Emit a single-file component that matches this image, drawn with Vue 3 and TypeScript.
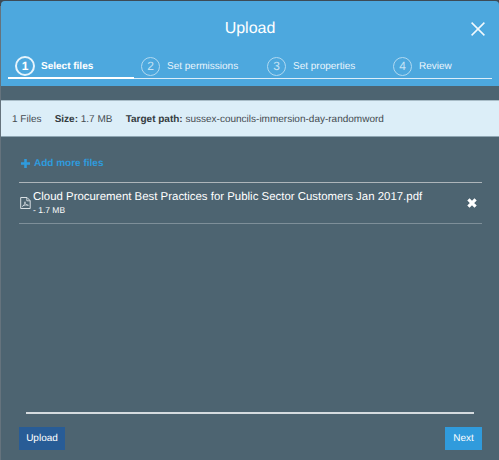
<script setup lang="ts">
interface Step {
  id: number
  label: string
}

const steps: Step[] = [
  { id: 1, label: 'Select files' },
  { id: 2, label: 'Set permissions' },
  { id: 3, label: 'Set properties' },
  { id: 4, label: 'Review' },
]
const current = 1

const file = {
  name: 'Cloud Procurement Best Practices for Public Sector Customers Jan 2017.pdf',
  size: '1.7 MB',
}
const target = 'sussex-councils-immersion-day-randomword'
</script>

<template>
  <div class="backdrop">
    <section class="dialog">
      <header class="header">
        <div class="title-row">
          <h1>Upload</h1>
          <button class="close" aria-label="Close">
            <svg width="14" height="14" viewBox="0 0 14 14">
              <path d="M.6 .6 13.4 13.4M13.4 .6 .6 13.4" fill="none" stroke="#f2f9fd" stroke-width="1.5" />
            </svg>
          </button>
        </div>
        <ol class="steps">
          <li v-for="s in steps" :key="s.id" :class="{ active: s.id === current }">
            <span class="num">{{ s.id }}</span>
            <span class="label">{{ s.label }}</span>
          </li>
        </ol>
      </header>

      <div class="info">
        <span>1 Files</span>
        <span><b>Size:</b> {{ file.size }}</span>
        <span><b>Target path:</b> {{ target }}</span>
      </div>

      <div class="body">
        <a class="add">
          <svg width="9" height="9" viewBox="0 0 9 9">
            <path d="M3.2 0h2.6v3.2H9v2.6H5.8V9H3.2V5.8H0V3.2h3.2z" fill="#2f9bdd" />
          </svg>
          Add more files
        </a>
        <div class="file">
          <svg class="pdf" width="11" height="12" viewBox="0 0 11 12">
            <g fill="none" stroke="#d9e0e4">
              <path d="M.7 .5h6.3l3.2 3.2v7.8H.7z" />
              <path d="M6.8 .6v3.2h3.3" stroke-width=".9" />
              <path d="M2.2 9.8c1.5-.6 2.9-3.2 2.8-5.3M4.9 5c.2 2 1.5 3.3 3.6 3.4M2.7 8.8c1.6-.8 3.2-1 5.6-.7" stroke-width=".8" />
            </g>
          </svg>
          <div class="meta">
            <div class="name">{{ file.name }}</div>
            <div class="size">- {{ file.size }}</div>
          </div>
          <button class="remove" aria-label="Remove file">
            <svg width="10" height="10" viewBox="0 0 10 10">
              <path d="M1.4 1.4 8.6 8.6M8.6 1.4 1.4 8.6" fill="none" stroke="#fff" stroke-width="3.2" />
            </svg>
          </button>
        </div>
      </div>

      <footer class="footer">
        <button class="btn upload">Upload</button>
        <button class="btn next">Next</button>
      </footer>
    </section>
  </div>
</template>

<style>
body {
  overflow: hidden;
}
</style>

<style scoped>
* {
  box-sizing: border-box;
}
.backdrop {
  height: 460px;
  padding: 1px 0 0 1px;
  background: linear-gradient(#3d4b56, #3d4b56) top / 100% 6px no-repeat, #65737d;
  font-family: 'Liberation Sans', Arial, sans-serif;
  font-size: 10px;
  color: #fff;
  text-rendering: geometricPrecision;
}
.dialog {
  display: flex;
  flex-direction: column;
  height: 459px;
  background: #4d6471;
  border-radius: 4px 4px 0 0;
  overflow: hidden;
}
button {
  border: 0;
  padding: 0;
  background: none;
  font: inherit;
  color: inherit;
  text-rendering: inherit;
}
svg {
  display: block;
}
.header {
  height: 85px;
  background: #4da8de;
  padding: 0 7px;
}
.title-row {
  display: grid;
  grid-template-columns: 1fr auto 1fr;
  align-items: center;
  padding: 18px 7px 0 0;
  height: 38px;
}
h1 {
  grid-column: 2;
  margin: 0 0 0 7px;
  font-size: 16px;
  line-height: 20px;
  font-weight: 400;
}
.close {
  justify-self: end;
}
.steps {
  display: flex;
  margin: 16px 0 0;
  padding: 0;
  list-style: none;
}
li {
  display: flex;
  flex: none;
  align-items: center;
  gap: 7px;
  width: 126px;
  height: 24px;
  padding: 0 0 1px 7px;
  border-bottom: 1px solid #dceefa;
  color: #eaf5fc;
}
li:last-child {
  flex: 1;
}
li.active {
  border-bottom: 2px solid #fff;
  color: #fff;
  font-weight: 700;
  padding-bottom: 0;
}
.num {
  display: flex;
  align-items: center;
  justify-content: center;
  width: 19px;
  height: 19px;
  border: 1px solid #b0d9f1;
  border-radius: 50%;
  color: #c5e3f5;
  font-size: 12px;
  line-height: 17px;
}
.active .num {
  width: 20px;
  height: 20px;
  margin-right: -1px;
  border: 2px solid #e6f4fc;
  color: #fff;
}
.info {
  display: flex;
  align-items: center;
  gap: 13.2px;
  height: 37px;
  margin-top: 14px;
  padding: 1px 11px 0;
  background: #dceef8;
  border-top: 1px solid #a9bdc8;
  border-bottom: 1px solid #8fa6b3;
  color: #444b50;
}
.info b {
  color: #343b40;
}
.body {
  flex: 1;
  margin: 0 17px 0 18px;
}
.add {
  display: flex;
  align-items: center;
  gap: 4px;
  height: 45px;
  padding: 8px 0 0 2px;
  color: #2f9bdd;
  font-weight: 700;
}
.file {
  display: flex;
  align-items: center;
  height: 42px;
  border-top: 1px solid #adb5ba;
  border-bottom: 1px solid #7e8f99;
  padding: 0 5px 0 1px;
}
.pdf {
  margin-top: -1px;
}
.meta {
  flex: 1;
  padding: 0 0 1px 2px;
}
.name {
  font-size: 11.43px;
  line-height: 14px;
  white-space: nowrap;
}
.size {
  font-size: 8.5px;
  line-height: 12px;
}
.footer {
  display: flex;
  justify-content: space-between;
  align-items: flex-start;
  height: 48px;
  margin: 0 25px;
  padding-top: 13px;
  border-top: 2px solid #d5dbdf;
}
.btn {
  height: 23px;
  line-height: 22px;
}
.upload {
  width: 46px;
  margin-left: -7px;
  background: #285c96;
}
.next {
  width: 37px;
  margin-right: -8px;
  background: #309bdc;
}
</style>
